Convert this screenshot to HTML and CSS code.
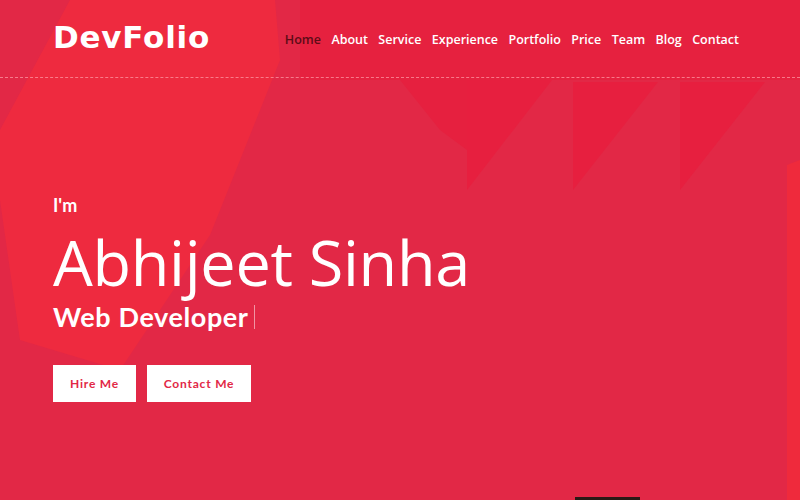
FILE: index.html
```html
<!DOCTYPE html>
<html lang="en">
<head>
<meta charset="utf-8">
<title>DevFolio</title>
<link rel="stylesheet" href="styles.css">
</head>
<body>
<section class="hero">
  <svg class="bg" width="800" height="500" viewBox="0 0 800 500" aria-hidden="true">
    <rect x="0" y="0" width="800" height="500" fill="#e22846"/>
    <polygon points="300,0 800,0 800,80 300,80" fill="#e6213f"/>
    <polygon points="70,0 275,0 280,60 210,235 120,370 20,340 0,200 0,130" fill="#ee2a3f"/>
    <polygon points="400,80 467,80 467,150 440,130" fill="#e6203f"/>
    <polygon points="467,80 552,80 467,190" fill="#e71f3f"/>
    <polygon points="573,82 658,82 573,190" fill="#e71f3f"/>
    <polygon points="680,82 765,82 680,190" fill="#e71f3f"/>
    <polygon points="787,165 800,160 800,500 787,500" fill="#ef2a3c"/>
    <rect x="575" y="497" width="65" height="3" fill="#2a1a16"/>
  </svg>
  <header class="topbar">
    <a class="logo" href="#">DevFolio</a>
    <nav class="nav">
      <a class="active" href="#">Home</a>
      <a href="#">About</a>
      <a href="#">Service</a>
      <a href="#">Experience</a>
      <a href="#">Portfolio</a>
      <a href="#">Price</a>
      <a href="#">Team</a>
      <a href="#">Blog</a>
      <a href="#">Contact</a>
    </nav>
  </header>
  <div class="intro">
    <p class="im">I'm</p>
    <h1 class="name">Abhijeet Sinha</h1>
    <p class="role">Web Developer<span class="cursor"></span></p>
    <div class="actions">
      <a class="btn btn-hire" href="#">Hire Me</a>
      <a class="btn btn-contact" href="#">Contact Me</a>
    </div>
  </div>
</section>
</body>
</html>
```
FILE: styles.css
```css
* { box-sizing: border-box; }
html, body { margin: 0; padding: 0; }
body {
  font-family: "Open Sans", "Liberation Sans", sans-serif;
  background: #e22846;
  color: #fff;
}
.hero {
  position: relative;
  width: 800px;
  height: 500px;
  overflow: hidden;
}
.bg {
  position: absolute;
  left: 0;
  top: 0;
  z-index: 0;
}
.topbar {
  position: relative;
  z-index: 1;
  height: 78px;
  display: flex;
  align-items: center;
  justify-content: space-between;
  padding: 0 61px 0 53px;
  border-bottom: 1px dashed rgba(255, 160, 170, 0.7);
}
.logo {
  font-family: "DejaVu Sans", sans-serif;
  font-weight: 700;
  font-size: 31px;
  color: #fff;
  text-decoration: none;
  letter-spacing: 0.8px;
  margin-top: -3px;
}
.nav {
  display: flex;
  gap: 10.4px;
  margin-top: 2px;
}
.nav a {
  font-family: "Open Sans", sans-serif;
  font-size: 12.5px;
  font-weight: 600;
  color: #fff;
  text-decoration: none;
}
.nav a.active { color: #5c0c17; }
.intro {
  position: relative;
  z-index: 1;
  padding: 116px 0 0 53px;
}
.im {
  margin: 0;
  font-family: "Lato", sans-serif;
  font-weight: 700;
  font-size: 18px;
  line-height: 22px;
}
.name {
  margin: 11px 0 0;
  font-family: "Open Sans", sans-serif;
  font-weight: 400;
  font-size: 63px;
  line-height: 70px;
  letter-spacing: -0.3px;
}
.role {
  margin: 4px 0 0;
  font-family: "Lato", sans-serif;
  font-weight: 700;
  font-size: 27px;
  line-height: 32px;
  letter-spacing: 0.6px;
  display: flex;
  align-items: center;
}
.cursor {
  display: inline-block;
  width: 1px;
  height: 24px;
  margin-left: 5px;
  background: rgba(255, 255, 255, 0.5);
}
.actions {
  display: flex;
  gap: 11px;
  margin-top: 32px;
}
.btn {
  display: flex;
  align-items: center;
  justify-content: center;
  height: 37px;
  background: #fff;
  color: #e22846;
  text-decoration: none;
  font-family: "Lato", sans-serif;
  font-weight: 700;
  font-size: 12px;
  letter-spacing: 0.8px;
}
.btn-hire { width: 83px; }
.btn-contact { width: 104px; }
```
